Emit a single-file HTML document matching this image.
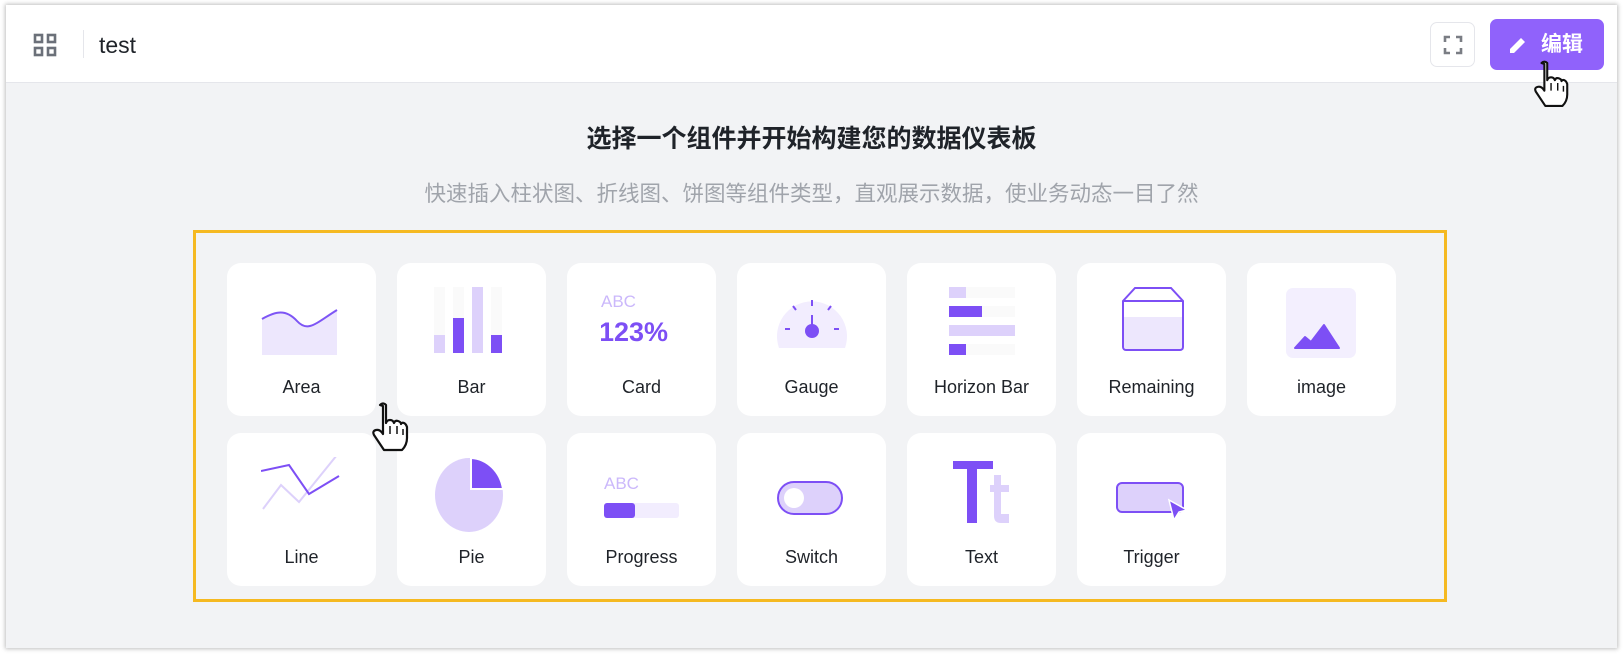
<!DOCTYPE html>
<html><head><meta charset="utf-8"><style>
*{box-sizing:border-box;margin:0;padding:0}
body{width:1623px;height:654px;background:#fff;font-family:"Liberation Sans","Noto Sans CJK SC",sans-serif;position:relative;overflow:hidden}
.frame{position:absolute;left:6px;top:5px;width:1611px;height:643px;background:#f2f3f5;box-shadow:0 0 4px 1px rgba(0,0,0,.25);overflow:hidden}
.hdr{position:absolute;left:0;top:0;right:0;height:78px;background:#fff;border-bottom:1px solid #e5e6eb}
.t{position:absolute;left:0;width:100%;text-align:center}
.box{position:absolute;left:187px;top:225px;width:1254px;height:372px;border:3px solid #f5b921}
.card{position:absolute;width:149px;height:153px;background:#fff;border-radius:14px}
.card svg{position:absolute;left:34px;top:24px}
.card span{position:absolute;left:0;width:100%;top:114px;text-align:center;font-size:18px;color:#1f2329}
</style></head><body>
<div class="frame">
 <div class="hdr">
  <svg style="position:absolute;left:27px;top:28px" width="24" height="24" viewBox="0 0 24 24" fill="none" stroke="#6b7079" stroke-width="2.6"><rect x="2" y="2" width="7" height="7"/><rect x="15" y="2" width="7" height="7"/><rect x="2" y="15" width="7" height="7"/><rect x="15" y="15" width="7" height="7"/></svg>
  <div style="position:absolute;left:77px;top:25px;width:1px;height:28px;background:#e5e6eb"></div>
  <div style="position:absolute;left:93px;top:27px;font-size:23px;color:#1f2329">test</div>
  <div style="position:absolute;left:1424px;top:17px;width:45px;height:45px;border:1px solid #e5e6eb;border-radius:7px;background:#fff">
   <svg style="position:absolute;left:12px;top:12px" width="20" height="20" viewBox="0 0 20 20" fill="none" stroke="#7a7d84" stroke-width="2.6"><path d="M2 7V2h5M13 2h5v5M18 13v5h-5M7 18H2v-5"/></svg>
  </div>
  <div style="position:absolute;left:1484px;top:14px;width:114px;height:51px;background:#9062fb;border-radius:7px;color:#fff;font-size:21px;font-weight:bold;line-height:51px">
   <svg style="position:absolute;left:18px;top:16px" width="20" height="20" viewBox="0 0 20 20"><path d="M2 18v-4L13 3l4 4L6 18z" fill="#fff"/></svg>
   <span style="position:absolute;left:51px">编辑</span>
  </div>
 </div>
 <div class="t" style="top:114px;font-size:25px;font-weight:bold;color:#1f2329">选择一个组件并开始构建您的数据仪表板</div>
 <div class="t" style="top:172px;font-size:21.5px;color:#a0a4ab">快速插入柱状图、折线图、饼图等组件类型，直观展示数据，使业务动态一目了然</div>
 <div class="box"></div>
</div>
<div class="card" style="left:227px;top:263px"><svg width="80" height="70" viewBox="0 0 80 70"><path d="M1 32C15 24 25 22 36 34S55 36 76 23V68H1z" fill="#ede7fd"/><path d="M1 32C15 24 25 22 36 34S55 36 76 23" fill="none" stroke="#7d55f5" stroke-width="2"/></svg><span>Area</span></div>
<div class="card" style="left:397px;top:263px"><svg width="80" height="70" viewBox="0 0 80 70"><rect x="3" y="0" width="11" height="66" fill="#fafafa"/><rect x="22" y="0" width="11" height="66" fill="#fafafa"/><rect x="60" y="0" width="11" height="66" fill="#fafafa"/><rect x="3" y="48" width="11" height="18" fill="#ddd1fb"/><rect x="22" y="31" width="11" height="35" fill="#7d4ff5"/><rect x="41" y="0" width="11" height="66" fill="#ddd1fb"/><rect x="60" y="48" width="11" height="18" fill="#7d4ff5"/></svg><span>Bar</span></div>
<div class="card" style="left:567px;top:263px"><svg width="90" height="70" viewBox="0 0 90 70"><text x="0" y="20" font-family="Liberation Sans" font-size="17" fill="#cbb8fb">ABC</text><text x="-2" y="54" font-family="Liberation Sans" font-size="27" font-weight="bold" fill="#7d4ff5">123%</text></svg><span>Card</span></div>
<div class="card" style="left:737px;top:263px"><svg width="80" height="70" viewBox="0 0 80 70"><path d="M8 61A35 35 0 1 1 74 61z" fill="#f2edfe"/><g stroke="#7d4ff5" stroke-width="2"><path d="M41 13v6M22 19l3 4M60 19l-3 4M14 42h5M63 42h5M41 28v14"/></g><circle cx="41" cy="44" r="7" fill="#7d4ff5"/></svg><span>Gauge</span></div>
<div class="card" style="left:907px;top:263px"><svg width="80" height="75" viewBox="0 0 80 75"><rect x="8" y="0" width="66" height="11" fill="#fafafa"/><rect x="8" y="0" width="17" height="11" fill="#ddd1fb"/><rect x="8" y="19" width="66" height="11" fill="#fafafa"/><rect x="8" y="19" width="33" height="11" fill="#7d4ff5"/><rect x="8" y="38" width="66" height="11" fill="#ddd1fb"/><rect x="8" y="57" width="66" height="11" fill="#fafafa"/><rect x="8" y="57" width="17" height="11" fill="#7d4ff5"/></svg><span>Horizon Bar</span></div>
<div class="card" style="left:1077px;top:263px"><svg width="80" height="75" viewBox="0 0 80 75"><rect x="12" y="30" width="61" height="33" fill="#ede7fd"/><path d="M12 14L24 1H60L72 14V60a3 3 0 0 1-3 3H15a3 3 0 0 1-3-3zM12 14H72" fill="none" stroke="#7d4ff5" stroke-width="2"/></svg><span>Remaining</span></div>
<div class="card" style="left:1247px;top:263px"><svg width="80" height="75" viewBox="0 0 80 75"><rect x="5" y="1" width="70" height="70" rx="7" fill="#f3effe"/><path d="M14 61L24 50L30 55L43 38L58 61z" fill="#7d4ff5" stroke="#7d4ff5" stroke-width="2" stroke-linejoin="round"/></svg><span>image</span></div>
<div class="card" style="left:227px;top:433px"><svg width="80" height="70" viewBox="0 0 80 70"><path d="M2 52L20 28L38 45L76 -2" fill="none" stroke="#ddd1fb" stroke-width="2"/><path d="M0 14L28 8L48 37L78 19" fill="none" stroke="#7d4ff5" stroke-width="2"/></svg><span>Line</span></div>
<div class="card" style="left:397px;top:433px"><svg width="80" height="80" viewBox="0 0 80 80"><ellipse cx="38" cy="38" rx="34" ry="37" fill="#ddd1fb"/><path d="M40 1A34 37 0 0 1 72 32H40z" fill="#7d4ff5" stroke="#fff" stroke-width="2"/></svg><span>Pie</span></div>
<div class="card" style="left:567px;top:433px"><svg width="90" height="70" viewBox="0 0 90 70"><text x="3" y="32" font-family="Liberation Sans" font-size="17" fill="#cbb8fb">ABC</text><rect x="3" y="46" width="75" height="15" rx="3" fill="#f2edfe"/><rect x="3" y="46" width="31" height="15" rx="3" fill="#7d4ff5"/></svg><span>Progress</span></div>
<div class="card" style="left:737px;top:433px"><svg width="80" height="70" viewBox="0 0 80 70"><rect x="7" y="25" width="64" height="32" rx="16" fill="#ddd1fb" stroke="#7d4ff5" stroke-width="2"/><circle cx="23" cy="41" r="10" fill="#fff"/></svg><span>Switch</span></div>
<div class="card" style="left:907px;top:433px"><svg width="80" height="75" viewBox="0 0 80 75"><path d="M12 4H52V12H36V66H26V12H12z" fill="#7d4ff5"/><path d="M53 18h7v10h8v7h-8v22h8v9H60q-7 0-7-7V35h-4v-7h4z" fill="#ddd1fb"/></svg><span>Text</span></div>
<div class="card" style="left:1077px;top:433px"><svg width="80" height="80" viewBox="0 0 80 80"><rect x="6" y="26" width="66" height="29" rx="5" fill="#ddd1fb" stroke="#7d4ff5" stroke-width="2"/><path d="M58 43L76 53L68 55L63 63z" fill="#7d4ff5" stroke="#fff" stroke-width="1.5"/></svg><span>Trigger</span></div>
<svg style="position:absolute;left:370px;top:402px" width="42" height="50" viewBox="0 0 42 50"><path d="M10 3q3-3 6 0v18q1-3 4-3t4 3q1-3 4-2t3 3q1-2 3-1t3 4v11q0 7-5 12H14L4 33q-2-4 2-5t7 4V4z" fill="#fff" stroke="#111" stroke-width="2.2" stroke-linejoin="round"/><path d="M20 24v8M27 24v8M33 27v6" stroke="#111" stroke-width="1.5"/></svg>
<svg style="position:absolute;left:1532px;top:60px" width="40" height="48" viewBox="0 0 42 50"><path d="M10 3q3-3 6 0v18q1-3 4-3t4 3q1-3 4-2t3 3q1-2 3-1t3 4v11q0 7-5 12H14L4 33q-2-4 2-5t7 4V4z" fill="#fff" stroke="#111" stroke-width="2.2" stroke-linejoin="round"/><path d="M20 24v8M27 24v8M33 27v6" stroke="#111" stroke-width="1.5"/></svg>
</body></html>
